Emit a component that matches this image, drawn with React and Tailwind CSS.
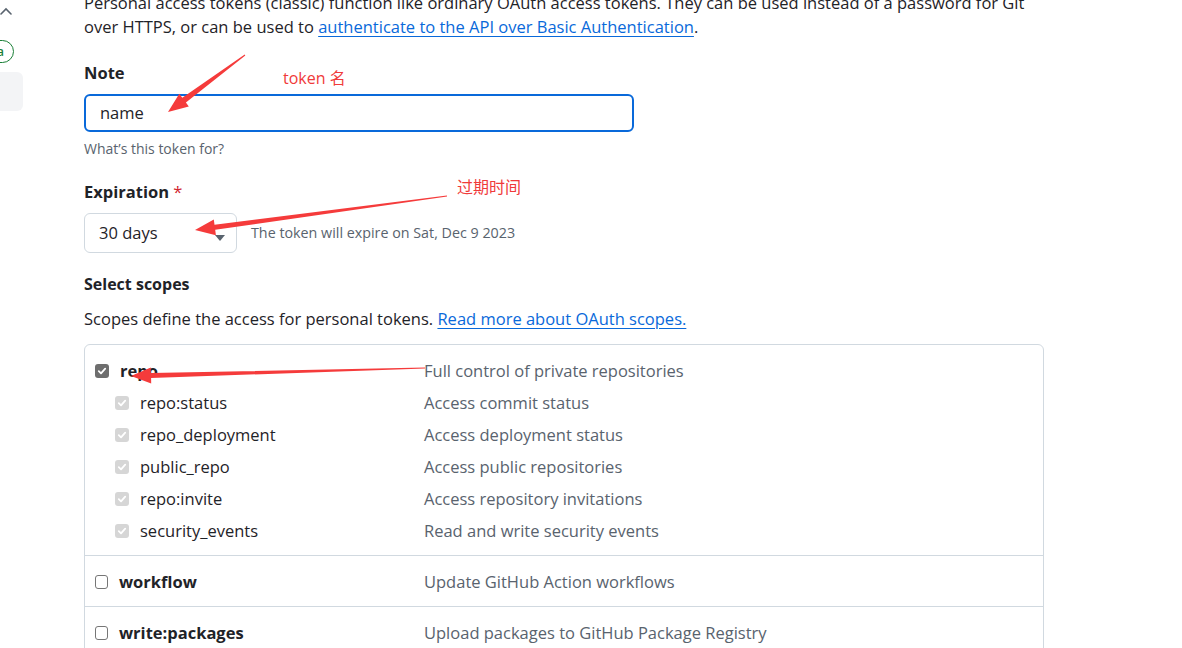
import React from "react";

/* ================= DATA ================= */

const repoChildren = [
  { name: "repo:status", desc: "Access commit status" },
  { name: "repo_deployment", desc: "Access deployment status" },
  { name: "public_repo", desc: "Access public repositories" },
  { name: "repo:invite", desc: "Access repository invitations" },
  { name: "security_events", desc: "Read and write security events" },
];

const otherScopes = [
  { name: "workflow", desc: "Update GitHub Action workflows" },
  { name: "write:packages", desc: "Upload packages to GitHub Package Registry" },
];

/* ================= HELPERS ================= */

// tapered annotation arrow: thin tail -> thick shaft -> triangular head
function arrowPoints(tail, tip, headLen, headW, shaftW) {
  const dx = tip[0] - tail[0];
  const dy = tip[1] - tail[1];
  const len = Math.hypot(dx, dy);
  const ux = dx / len;
  const uy = dy / len;
  const nx = -uy;
  const ny = ux;
  const bx = tip[0] - ux * headLen;
  const by = tip[1] - uy * headLen;
  const p = (x, y) => `${x.toFixed(1)},${y.toFixed(1)}`;
  return [
    p(tail[0] + nx * 0.5, tail[1] + ny * 0.5),
    p(bx + nx * (shaftW / 2), by + ny * (shaftW / 2)),
    p(bx + nx * (headW / 2), by + ny * (headW / 2)),
    p(tip[0], tip[1]),
    p(bx - nx * (headW / 2), by - ny * (headW / 2)),
    p(bx - nx * (shaftW / 2), by - ny * (shaftW / 2)),
    p(tail[0] - nx * 0.5, tail[1] - ny * 0.5),
  ].join(" ");
}

function Check({ variant }) {
  if (variant === "off") {
    return (
      <span className="w-[13px] h-[14px] rounded-[3px] border border-[#767676] bg-white shrink-0" />
    );
  }
  const bg = variant === "on" ? "bg-[#6e6e6e]" : "bg-[#d6d6d6]";
  return (
    <span
      className={`w-[14px] h-[14px] rounded-[3px] ${bg} shrink-0 flex items-center justify-center`}
    >
      <svg width="10" height="10" viewBox="0 0 10 10">
        <path
          d="M1.8 5.2 L4 7.3 L8.2 2.6"
          fill="none"
          stroke="white"
          strokeWidth="1.8"
          strokeLinecap="round"
          strokeLinejoin="round"
        />
      </svg>
    </span>
  );
}

/* ================= COMPONENT ================= */

export default function App() {
  return (
    <div
      className="relative w-[1182px] h-[648px] overflow-hidden bg-white text-[#1f2328]"
      style={{ fontFamily: '"Open Sans", "Noto Sans CJK SC", sans-serif' }}
    >
      <div className="flex">
        {/* LEFT SIDEBAR (scrolled out) */}
        <div className="w-[24px] shrink-0 pt-[6px]">
          <svg width="14" height="10" viewBox="0 0 14 10">
            <path
              d="M1 8 L6 3 L11 8"
              fill="none"
              stroke="#59636e"
              strokeWidth="1.6"
              strokeLinecap="round"
            />
          </svg>
          <div className="mt-[24px] -ml-[20px] w-[34px] h-[23px] rounded-full border border-[#1a7f37] text-[#1a7f37] text-[12px] font-semibold flex items-center justify-end pr-[9px]">
            a
          </div>
          <div className="mt-[9px] -ml-[10px] w-[33px] h-[39px] rounded-[6px] bg-[#f3f4f6]" />
        </div>

        {/* MAIN */}
        <div className="ml-[60px] w-[960px] -mt-[9px]">
          <p className="text-[16.5px] leading-[24px]">
            Personal access tokens (classic) function like ordinary OAuth access
            tokens. They can be used instead of a password for Git over HTTPS, or
            can be used to{" "}
            <span className="text-[#0969da] underline underline-offset-[3px]">
              authenticate to the API over Basic Authentication
            </span>
            .
          </p>

          {/* NOTE */}
          <div className="mt-[22px]">
            <div className="text-[16.5px] leading-[24px] font-bold">Note</div>
            <div className="mt-[9px] w-[550px] h-[38px] rounded-[6px] border-2 border-[#0969da] flex items-center px-[14px] text-[16.5px]">
              name
            </div>
            <div className="mt-[7px] text-[14px] leading-[20px] text-[#59636e]">
              What’s this token for?
            </div>
          </div>

          {/* EXPIRATION */}
          <div className="mt-[21px]">
            <div className="text-[16.5px] leading-[24px] font-bold">
              Expiration <span className="text-[#d1242f] font-normal">*</span>
            </div>
            <div className="mt-[9px] flex items-center gap-[14px]">
              <div className="relative w-[153px] h-[40px] rounded-[6px] border border-[#d1d9e0] flex items-center px-[14px] text-[16.5px]">
                30 days
                <svg
                  width="10"
                  height="6"
                  viewBox="0 0 10 6"
                  className="absolute right-[11px] top-[21px]"
                >
                  <path d="M0 0 L10 0 L5 6 Z" fill="#59636e" />
                </svg>
              </div>
              <span className="text-[14.3px] text-[#59636e]">
                The token will expire on Sat, Dec 9 2023
              </span>
            </div>
          </div>

          {/* SCOPES */}
          <div className="mt-[19px]">
            <div className="text-[16px] leading-[24px] font-bold">Select scopes</div>
            <p className="mt-[11px] text-[16.5px] leading-[24px]">
              Scopes define the access for personal tokens.{" "}
              <span className="text-[#0969da] underline underline-offset-[3px]">
                Read more about OAuth scopes.
              </span>
            </p>

            <div className="mt-[13px] border border-[#d1d9e0] rounded-t-[6px] text-[16.5px] leading-[24px]">
              <div className="pt-[10px] pb-2 px-[10px] border-b border-[#d1d9e0]">
                <div className="grid grid-cols-[329px_1fr] h-[32px] items-center">
                  <div className="flex items-center gap-[11px]">
                    <Check variant="on" />
                    <span className="font-bold">repo</span>
                  </div>
                  <span className="text-[#59636e]">
                    Full control of private repositories
                  </span>
                </div>
                {repoChildren.map((s) => (
                  <div
                    key={s.name}
                    className="grid grid-cols-[329px_1fr] h-[32px] items-center"
                  >
                    <div className="flex items-center gap-[11px] pl-[20px]">
                      <Check variant="disabled" />
                      <span>{s.name}</span>
                    </div>
                    <span className="text-[#59636e]">{s.desc}</span>
                  </div>
                ))}
              </div>

              {otherScopes.map((s) => (
                <div
                  key={s.name}
                  className="pt-[10px] pb-2 px-[10px] border-b border-[#d1d9e0]"
                >
                  <div className="grid grid-cols-[329px_1fr] h-[32px] items-center">
                    <div className="flex items-center gap-[11px]">
                      <Check variant="off" />
                      <span className="font-bold">{s.name}</span>
                    </div>
                    <span className="text-[#59636e]">{s.desc}</span>
                  </div>
                </div>
              ))}
            </div>
          </div>
        </div>
      </div>

      {/* ================= ANNOTATIONS ================= */}
      <span className="absolute left-[283px] top-[68px] text-[16px] leading-[20px] text-[#f03a3a]">
        token 名
      </span>
      <span className="absolute left-[457px] top-[177px] text-[16px] leading-[20px] text-[#f03a3a]">
        过期时间
      </span>
      <svg
        className="absolute inset-0 pointer-events-none"
        width="1182"
        height="648"
      >
        <polygon
          points={arrowPoints([245, 55], [168, 112], 20, 16, 6)}
          fill="#f53b3b"
        />
        <polygon
          points={arrowPoints([447, 196], [195, 230], 20, 16, 5)}
          fill="#f53b3b"
        />
        <polygon
          points={arrowPoints([425, 368], [131, 376], 20, 16, 5)}
          fill="#f53b3b"
        />
      </svg>
    </div>
  );
}
